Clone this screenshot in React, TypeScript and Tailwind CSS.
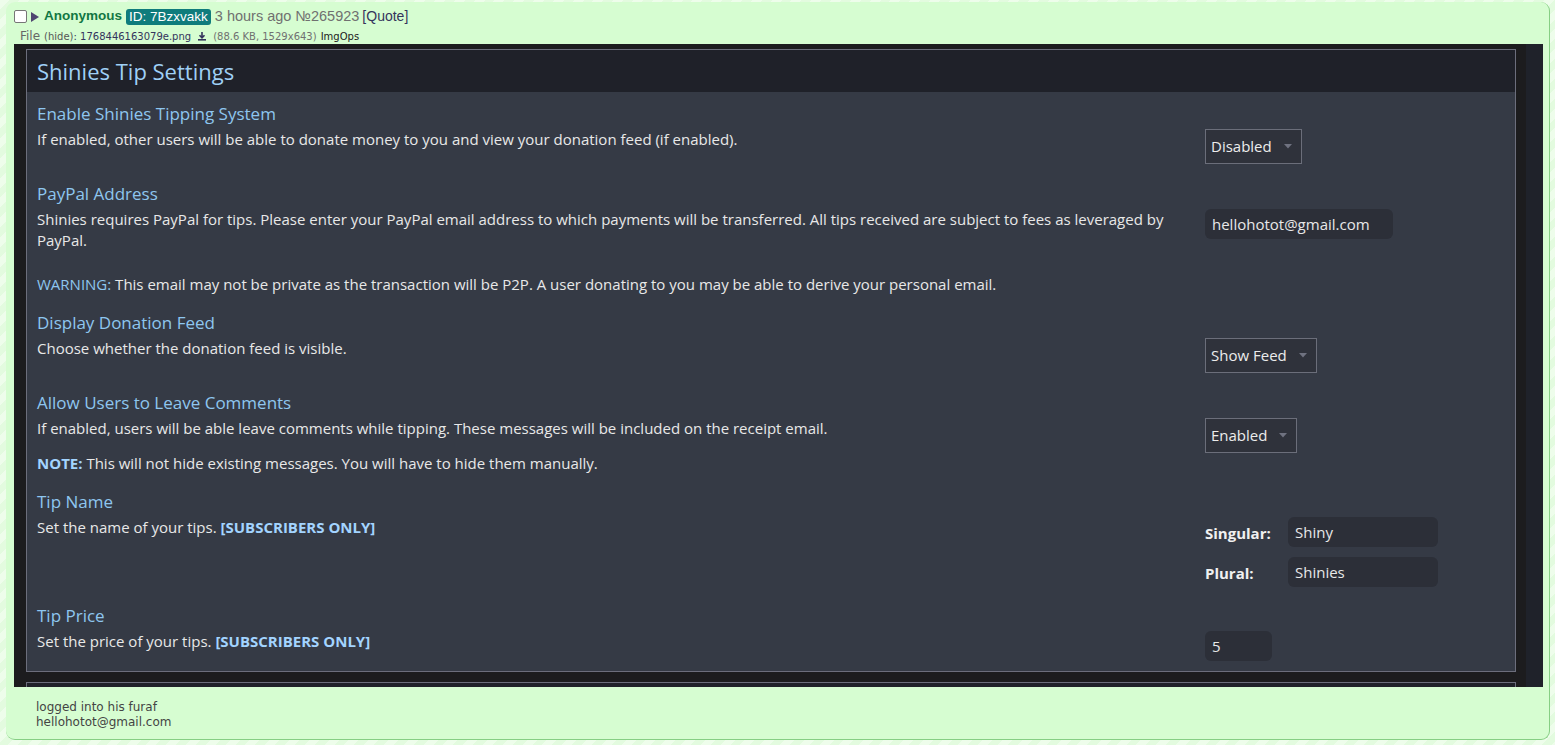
import React from "react";

function Select({ label }: { label: string }) {
  return (
    <div className="inline-flex h-[35px] items-center border border-[#6b6e7a] bg-[#2f323b] pl-[5px] pr-[9px] text-[15px] text-[#ececec]">
      <span>{label}</span>
      <svg width="8" height="5" viewBox="0 0 8 5" className="ml-[12px]">
        <polygon points="0,0 8,0 4,4.5" fill="#6f7280" />
      </svg>
    </div>
  );
}

function Input({ value, w }: { value: string; w: string }) {
  return (
    <div className={`flex h-[30px] items-center rounded-[6px] bg-[#2c2f38] pl-[7px] text-[15px] text-[#e8e8e8] ${w}`}>
      {value}
    </div>
  );
}

function Section({
  title,
  control,
  children,
  mt,
}: {
  title: string;
  control: React.ReactNode;
  children: React.ReactNode;
  mt: string;
}) {
  return (
    <div className={mt}>
      <div className="text-[17px] leading-[25px] text-[#8ec6ef]">{title}</div>
      <div className="mt-[3px] flex items-start">
        <div className="w-[1168px] text-[15px] leading-[21px] text-[#e8e8e8]">{children}</div>
        <div>{control}</div>
      </div>
    </div>
  );
}

export default function App() {
  return (
    <div className="min-h-[745px] w-full bg-[repeating-linear-gradient(135deg,#eefdeb_0px,#eefdeb_7px,#e3fbdf_7px,#e3fbdf_14px)] pl-[6px] pt-[2px]">
      <div className="h-[738px] w-[1544px] rounded-[9px] border-r border-b border-[#86cf84] bg-[#d6fdd1] pl-[8px]">
        {/* header row */}
        <div className="flex h-[23px] items-center pt-[6px] font-['Liberation_Sans',Arial,sans-serif] text-[13.5px]">
          <div className="h-[13px] w-[13px] rounded-[2px] border border-[#767676] bg-white" />
          <svg width="8" height="10" viewBox="0 0 8 10" className="ml-[4px]">
            <polygon points="0,0 8,5 0,10" fill="#4f4670" />
          </svg>
          <span className="ml-[5px] font-bold text-[#117743]">Anonymous</span>
          <span className="ml-[4px] rounded-[3px] bg-[#0f7c7c] px-[3px] leading-[16px] text-white">ID: 7Bzxvakk</span>
          <span className="ml-[4px] text-[14.5px] text-[#707070]">3 hours ago №265923</span>
          <span className="ml-[3px] text-[14px] text-[#34345c]">[Quote]</span>
        </div>
        {/* file line */}
        <div className="ml-[6px] mt-[3px] flex h-[16px] items-center font-['DejaVu_Sans',Verdana,sans-serif] text-[10px] text-[#34345c]">
          <span className="text-[12px] text-[#666]">File</span>
          <span className="ml-[4px] text-[#555]">(hide)</span>
          <span>: 1768446163079e.png</span>
          <svg width="10" height="10" viewBox="0 0 10 10" className="ml-[6px]">
            <path d="M5 1 V6.5 M2.5 4.2 L5 6.8 L7.5 4.2" stroke="#34345c" strokeWidth="1.6" fill="none" />
            <path d="M1 8.8 H9" stroke="#34345c" strokeWidth="1.6" />
          </svg>
          <span className="ml-[6px] text-[#707070]">(88.6 KB, 1529x643)</span>
          <span className="ml-[4px] text-[#222]">ImgOps</span>
        </div>
        {/* image */}
        <div className="flex h-[643px] w-[1529px] overflow-hidden bg-[#1c1c1e] font-['Open_Sans',sans-serif]">
          <div className="w-[1512px] pl-[12px] pt-[5px]">
            <div className="w-[1490px] border border-[#6c6e7c] bg-[#353a45]">
              <div className="flex h-[42px] items-center bg-[#1f2129] pl-[10px] text-[22px] text-[#9fd0f6]">
                Shinies Tip Settings
              </div>
              <div className="px-[10px] pb-[10px] pt-[9px]">
                <Section mt="" title="Enable Shinies Tipping System" control={<Select label="Disabled" />}>
                  <p>If enabled, other users will be able to donate money to you and view your donation feed (if enabled).</p>
                </Section>
                <Section mt="mt-[17px]" title="PayPal Address" control={<Input value="hellohotot@gmail.com" w="w-[188px] h-[29px]" />}>
                  <p>
                    Shinies requires PayPal for tips. Please enter your PayPal email address to which payments will be transferred. All tips received are subject to fees as leveraged by PayPal.
                  </p>
                  <p className="mt-[23px]">
                    <span className="text-[#8ec6ef]">WARNING:</span> This email may not be private as the transaction will be P2P. A user donating to you may be able to derive your personal email.
                  </p>
                </Section>
                <Section mt="mt-[15px]" title="Display Donation Feed" control={<Select label="Show Feed" />}>
                  <p>Choose whether the donation feed is visible.</p>
                </Section>
                <Section mt="mt-[17px]" title="Allow Users to Leave Comments" control={<Select label="Enabled" />}>
                  <p>If enabled, users will be able leave comments while tipping. These messages will be included on the receipt email.</p>
                  <p className="mt-[14px]">
                    <span className="font-bold text-[#a3d4ff]">NOTE:</span> This will not hide existing messages. You will have to hide them manually.
                  </p>
                </Section>
                <Section
                  mt="mt-[15px]"
                  title="Tip Name"
                  control={
                    <div className="flex flex-col gap-[10px]">
                      <div className="flex items-center">
                        <span className="w-[83px] pt-[2px] text-[15px] font-bold text-[#f0f0f0]">Singular:</span>
                        <Input value="Shiny" w="w-[150px]" />
                      </div>
                      <div className="flex items-center">
                        <span className="w-[83px] pt-[2px] text-[15px] font-bold text-[#f0f0f0]">Plural:</span>
                        <Input value="Shinies" w="w-[150px]" />
                      </div>
                    </div>
                  }
                >
                  <p>
                    Set the name of your tips. <span className="font-bold text-[#a3d4ff]">[SUBSCRIBERS ONLY]</span>
                  </p>
                </Section>
                <Section mt="mt-[16px]" title="Tip Price" control={<Input value="5" w="w-[67px]" />}>
                  <p>
                    Set the price of your tips. <span className="font-bold text-[#a3d4ff]">[SUBSCRIBERS ONLY]</span>
                  </p>
                </Section>
              </div>
            </div>
            <div className="mt-[10px] h-[40px] w-[1490px] border border-[#6c6e7c] bg-[#1f2129]" />
          </div>
          <div className="h-full w-[17px] bg-[#1f222a]" />
        </div>
        {/* comment */}
        <div className="ml-[22px] mt-[13px] font-['DejaVu_Sans',Verdana,sans-serif] text-[12px] leading-[15px] text-[#444]">
          <div>logged into his furaf</div>
          <div>hellohotot@gmail.com</div>
        </div>
      </div>
    </div>
  );
}
